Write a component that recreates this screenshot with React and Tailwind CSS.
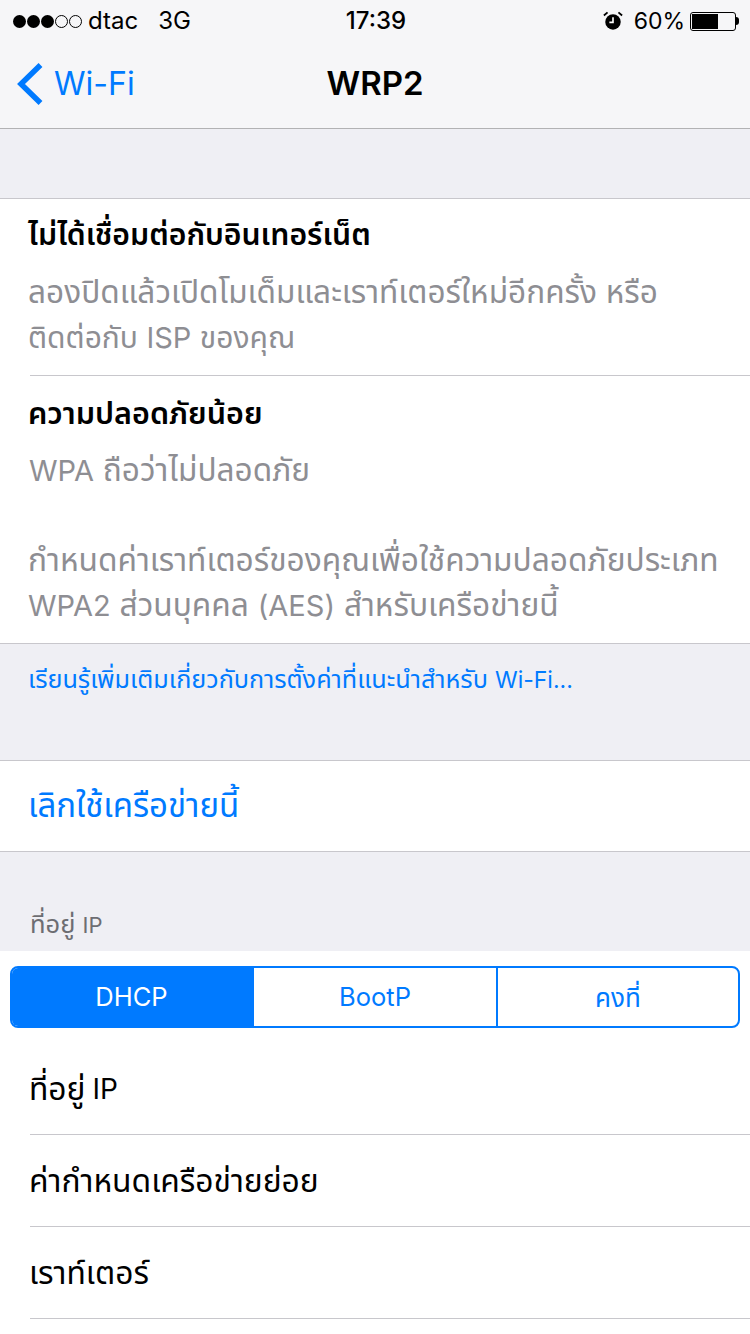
const rows = [
  { thai: 'ที่อยู่', latin: ' IP' },
  { thai: 'ค่ากำหนดเครือข่ายย่อย' },
  { thai: 'เราท์เตอร์' },
]

function StatusBar() {
  return (
    <div className="h-10 flex items-center justify-between pl-[13px] pr-[11px] pt-[2px] text-[24px] text-black">
      <div className="flex items-center w-[250px]">
        <div className="flex gap-[1px] mr-[6px]">
          {[1, 1, 1, 0, 0].map((on, i) => (
            <span key={i} className={on ? 'w-[13px] h-[13px] rounded-full bg-black' : 'w-[13px] h-[13px] rounded-full border border-black'} />
          ))}
        </div>
        <span>dtac</span>
        <span className="ml-[20px]">3G</span>
      </div>
      <span className="font-medium">17:39</span>
      <div className="flex items-center justify-end w-[250px]">
        <svg viewBox="0 0 22 22" className="w-[20px] h-[20px] mr-[11px]">
          <circle cx="11" cy="12" r="8.5" fill="#000" />
          <path d="M11 7v5.5H7" fill="none" stroke="#fff" strokeWidth="1.8" />
          <path d="M1 5l4-3.5M21 5l-4-3.5" stroke="#000" strokeWidth="2" />
        </svg>
        <span className="text-[23px]">60%</span>
        <div className="ml-[5px] w-[46px] h-[19px] border border-black rounded-[3px] p-[1px]">
          <div className="w-[26px] h-full bg-black" />
        </div>
        <div className="w-[3px] h-[8px] bg-black rounded-r-full" />
      </div>
    </div>
  )
}

function NavBar() {
  return (
    <div className="relative h-[89px] flex items-center justify-center border-b border-[#b2b2b4]">
      <div className="absolute left-[16px] top-[22px] flex items-center text-[#007aff]">
        <svg viewBox="0 0 28 44" className="w-[28px] h-[44px]">
          <path d="M24.5 3L5 22l19.5 19" fill="none" stroke="#007aff" strokeWidth="5.5" />
        </svg>
        <span className="ml-[10px] text-[32px] leading-[44px]">Wi-Fi</span>
      </div>
      <span className="text-[33px] font-semibold">WRP2</span>
    </div>
  )
}

export default function App() {
  return (
    <div className="w-[750px] h-[1334px] overflow-hidden bg-[#efeff4] text-black font-['Inter','Noto_Sans','Noto_Sans_Thai','DejaVu_Sans',sans-serif]">
      <div className="bg-[#f6f6f8]">
        <StatusBar />
        <NavBar />
      </div>
      <div className="h-[69px]" />
      <div className="bg-white border-y border-[#c8c7cc] h-[446px] pl-[30px]">
        <div className="h-[177px] border-b border-[#c8c7cc] pt-[13px]">
          <p className="-ml-[2px] text-[30.2px] leading-[44px] font-semibold">ไม่ได้เชื่อมต่อกับอินเทอร์เน็ต</p>
          <p className="-ml-[2px] mt-[13px] text-[31.6px] leading-[45px] text-[#8e8e93] whitespace-nowrap">
            ลองปิดแล้วเปิดโมเด็มและเราท์เตอร์ใหม่อีกครั้ง หรือ<br />
            <span className="text-[30px]">ติดต่อกับ <span className="text-[29px]">ISP</span> ของคุณ</span>
          </p>
        </div>
        <div className="pt-[15px]">
          <p className="-ml-[2px] text-[30.5px] leading-[44px] font-semibold">ความปลอดภัยน้อย</p>
          <p className="-ml-[1px] mt-[12px] text-[31.6px] leading-[45px] text-[#8e8e93]">
            <span className="text-[29px]">WPA</span> ถือว่าไม่ปลอดภัย
          </p>
          <p className="-ml-[2px] mt-[44px] text-[31.7px] leading-[45px] text-[#8e8e93] whitespace-nowrap">
            กำหนดค่าเราท์เตอร์ของคุณเพื่อใช้ความปลอดภัยประเภท<br />
            <span className="text-[29px]">WPA2</span> ส่วนบุคคล <span className="text-[29px]">(AES)</span> สำหรับเครือข่ายนี้
          </p>
        </div>
      </div>
      <p className="h-[116px] pl-[28px] pt-[17px] text-[25.2px] leading-[36px] text-[#007aff]">
        เรียนรู้เพิ่มเติมเกี่ยวกับการตั้งค่าที่แนะนำสำหรับ <span className="text-[23px]">Wi-Fi...</span>
      </p>
      <div className="h-[92px] bg-white border-y border-[#c8c7cc] pl-[28px] flex items-center text-[33px] text-[#007aff]">เลิกใช้เครือข่ายนี้</div>
      <div className="h-[99px] pl-[30px] pt-[54px] text-[25.5px] leading-[36px] text-[#6d6d72]">
        ที่อยู่ <span className="text-[22px]">IP</span>
      </div>
      <div className="bg-white h-[384px]">
        <div className="px-[10px] pt-[15px] pb-[15px]">
          <div className="h-[62px] grid grid-cols-[242px_244px_1fr] border-2 border-[#007aff] rounded-[8px] overflow-hidden text-[25.5px] text-[#007aff]">
            <div className="flex items-center justify-center pt-[1px] pr-[3px] bg-[#007aff] text-white">DHCP</div>
            <div className="flex items-center justify-center pt-[1px] border-r-2 border-[#007aff]">BootP</div>
            <div className="flex items-center justify-center pt-[1px] text-[26px]">คงที่</div>
          </div>
        </div>
        <div className="pl-[30px]">
          {rows.map((row) => (
            <div key={row.thai} className="h-[92px] flex items-center border-b border-[#c8c7cc] text-[31.8px] -indent-[1px] whitespace-pre">
              {row.thai}
              {row.latin && <span className="text-[28px]">{row.latin}</span>}
            </div>
          ))}
        </div>
      </div>
    </div>
  )
}
